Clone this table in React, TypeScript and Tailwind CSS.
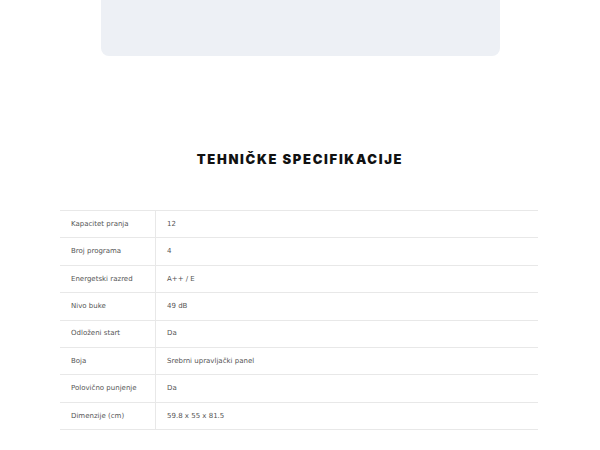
const specs: [string, string][] = [
  ["Kapacitet pranja", "12"],
  ["Broj programa", "4"],
  ["Energetski razred", "A++ / E"],
  ["Nivo buke", "49 dB"],
  ["Odloženi start", "Da"],
  ["Boja", "Srebrni upravljački panel"],
  ["Polovično punjenje", "Da"],
  ["Dimenzije (cm)", "59.8 x 55 x 81.5"],
];

export default function App() {
  return (
    <div className="w-[600px] h-[450px] bg-white overflow-hidden font-['DejaVu_Sans',sans-serif]">
      <div className="mx-auto w-[399px] h-[56px] bg-[#edf0f5] rounded-b-lg" />

      <h2 className="mt-[93px] text-center text-[13px] leading-[20px] font-black tracking-[0.13em] text-[#111] font-['Inter',sans-serif]">
        TEHNIČKE SPECIFIKACIJE
      </h2>

      <div className="mt-[41px] ml-[60px] w-[478px] border-t border-[#e8e8e8]">
        {specs.map(([label, value]) => (
          <div key={label} className="flex h-[27.375px] border-b border-[#e8e8e8] text-[7px] text-[#555]">
            <div className="w-[96px] pl-[11px] flex items-center border-r border-[#e8e8e8]">{label}</div>
            <div className="flex-1 pl-[11px] flex items-center">{value}</div>
          </div>
        ))}
      </div>
    </div>
  );
}
